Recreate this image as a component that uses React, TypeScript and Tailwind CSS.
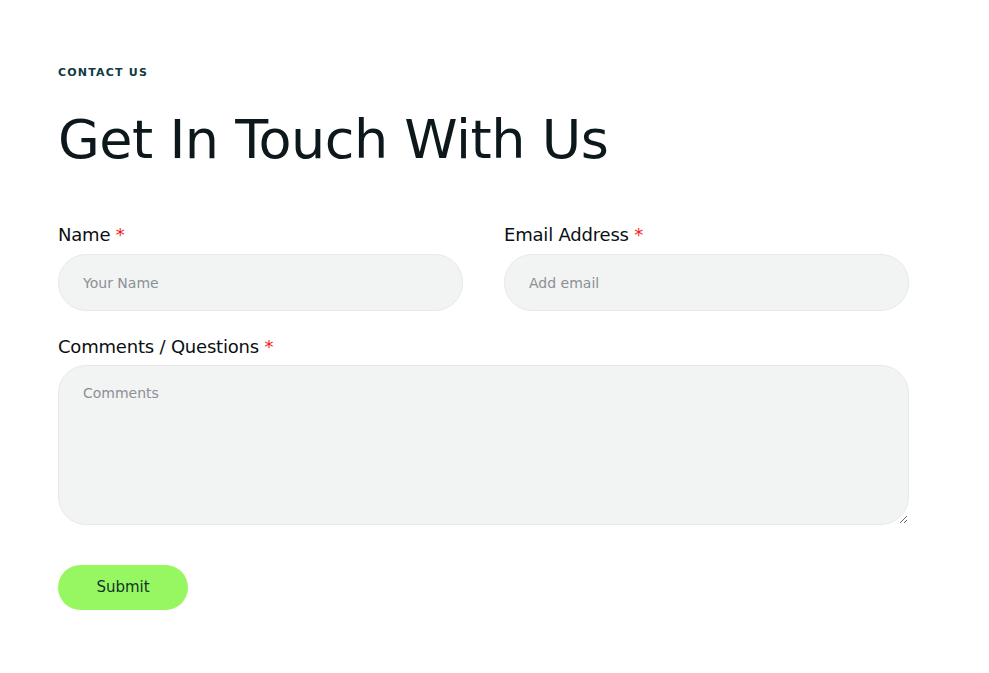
export default function App() {
  const label = "text-[18px] leading-[26px] text-[#0b0f12] tracking-[-0.2px]";
  const field =
    "w-full rounded-[28px] border border-[#e6e9eb] bg-[#f2f3f3] px-[24px] text-[14px] text-[#333] placeholder:text-[#8b9096] outline-none";
  return (
    <div className="min-h-screen bg-white" style={{ fontFamily: '"DejaVu Sans", "Noto Sans", sans-serif' }}>
      <div className="w-[851px] ml-[58px] pt-[66px]">
        <p className="text-[11px] font-bold tracking-[1.2px] text-[#123a44] leading-[14px]">CONTACT US</p>
        <h1 className="mt-[25px] text-[54px] leading-[70px] text-[#0d181c] tracking-[-0.5px]">Get In Touch With Us</h1>

        <form className="mt-[47px]">
          <div className="grid grid-cols-2 gap-[41px]">
            <div>
              <label className={label}>
                Name <span className="text-[#f01c1c]">*</span>
              </label>
              <input className={`${field} mt-[6px] h-[57px]`} placeholder="Your Name" />
            </div>
            <div>
              <label className={label}>
                Email Address <span className="text-[#f01c1c]">*</span>
              </label>
              <input className={`${field} mt-[6px] h-[57px]`} placeholder="Add email" />
            </div>
          </div>

          <div className="mt-[23px]">
            <label className={label}>
              Comments / Questions <span className="text-[#f01c1c]">*</span>
            </label>
            <textarea
              className={`${field} mt-[5px] block h-[160px] rounded-[24px] py-[17px]`}
              placeholder="Comments"
            />
          </div>

          <button
            type="button"
            className="mt-[40px] h-[45px] w-[130px] rounded-full bg-[#96f761] text-[15px] text-[#12332a]"
          >
            Submit
          </button>
        </form>
      </div>
    </div>
  );
}
